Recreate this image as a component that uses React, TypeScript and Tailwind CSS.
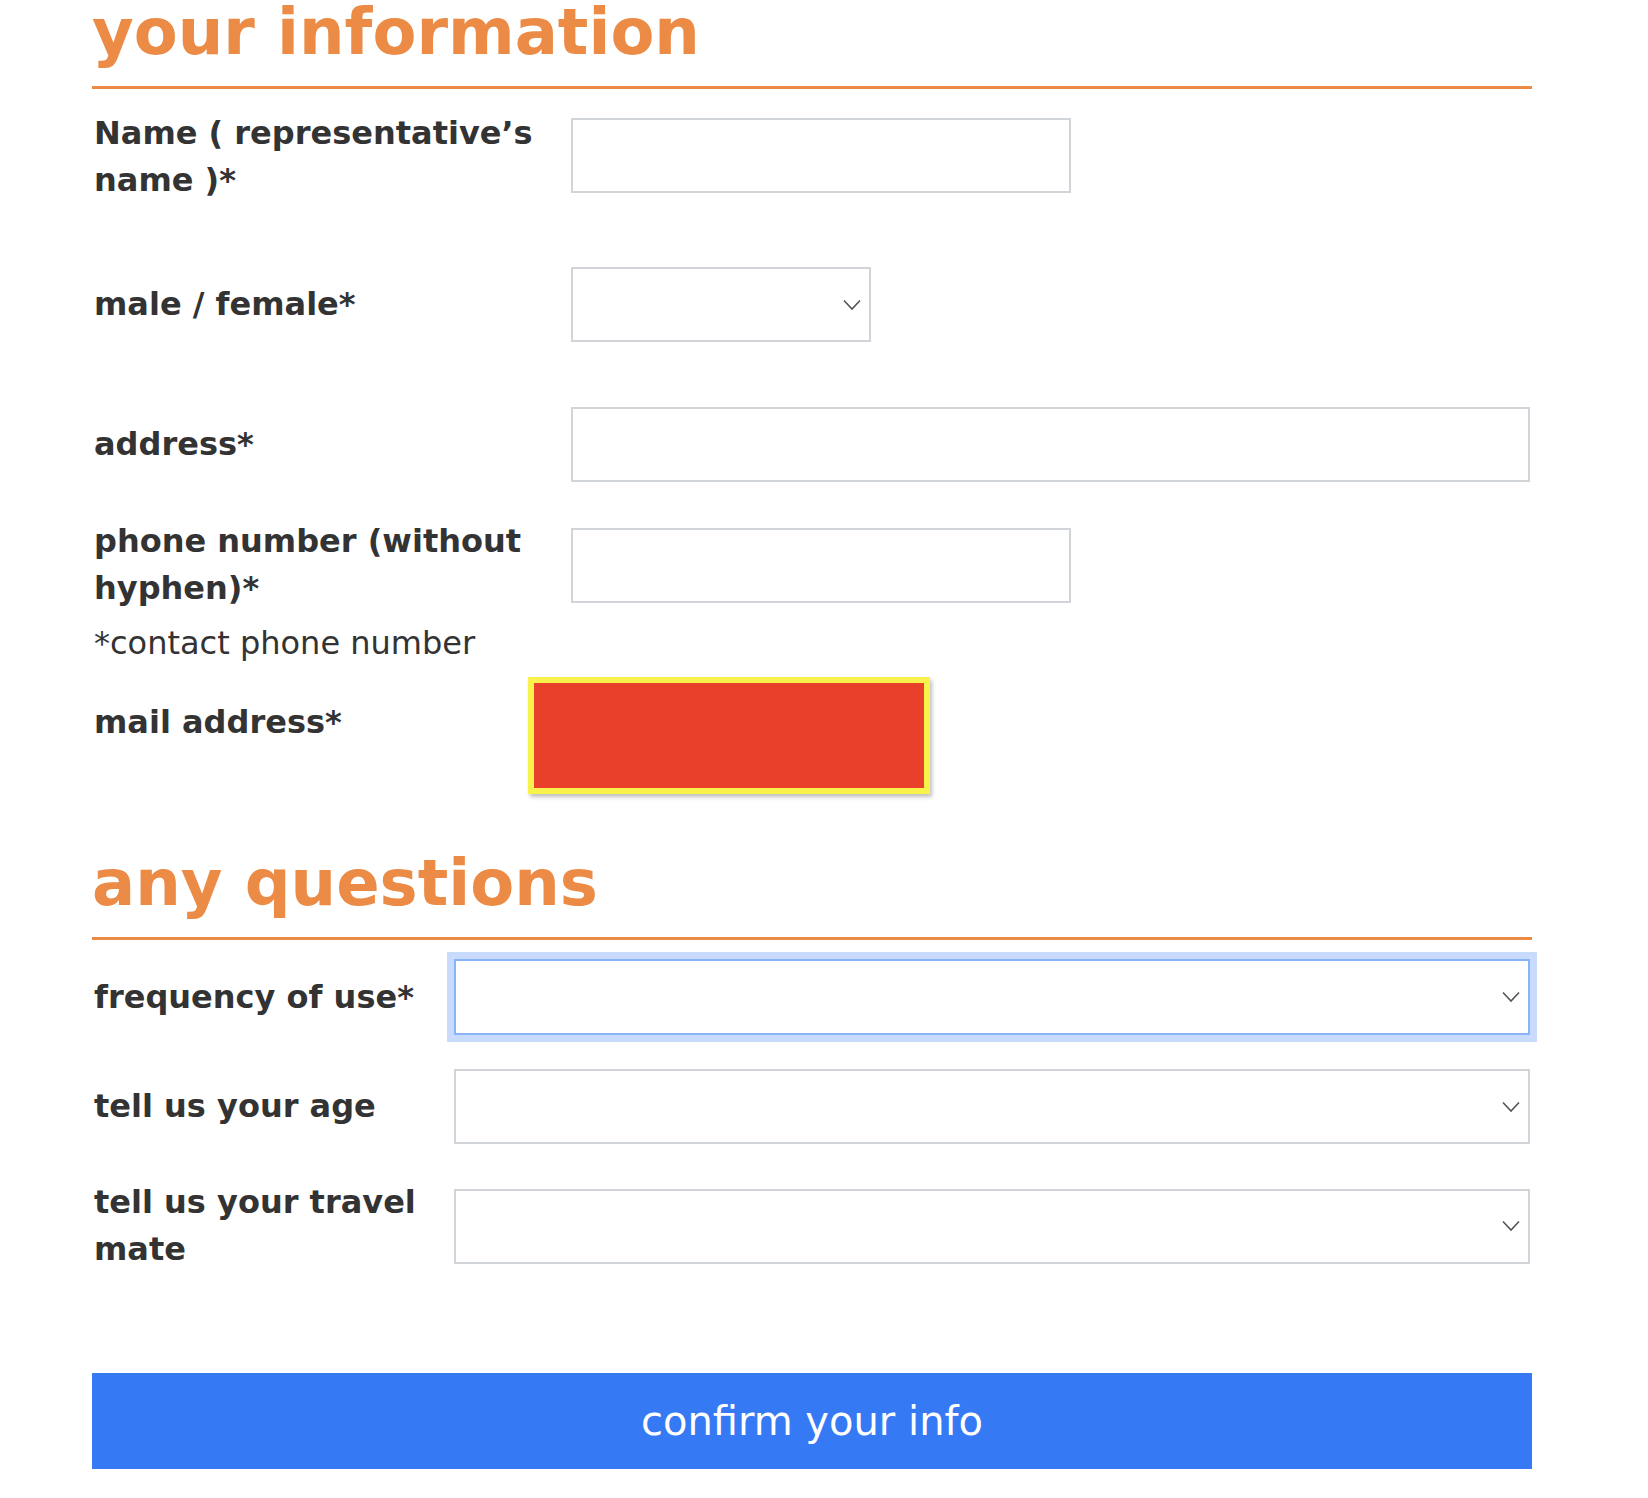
import React from "react";

const font = { fontFamily: '"DejaVu Sans", Verdana, sans-serif' };

function Chevron() {
  return (
    <svg width="18" height="11" viewBox="0 0 18 11" className="absolute right-[8px] top-1/2 -translate-y-1/2">
      <polyline points="1,1 9,9.5 17,1" fill="none" stroke="#555" strokeWidth="1.6" />
    </svg>
  );
}

function Label({ children, className = "" }: { children: React.ReactNode; className?: string }) {
  return (
    <div className={"text-[32px] leading-[47px] font-bold text-[#333] " + className}>
      {children}
    </div>
  );
}

export default function App() {
  return (
    <div className="bg-white w-[1648px] h-[1498px]" style={font}>
      <div className="ml-[92px] w-[1440px] pt-0">
        <h2 className="text-[64px] leading-none font-bold text-[#eb8b45] pb-[22px] border-b-[3px] border-[#eb8b45]">
          your information
        </h2>

        <div className="flex items-center mt-[18px]">
          <div className="w-[479px] pl-[2px] pt-[3px]">
            <Label className="w-[470px]">Name ( representative’s name )*</Label>
          </div>
          <div className="w-[500px] h-[75px] border-2 border-[#d1d5d9] bg-white" />
        </div>

        <div className="flex items-center mt-[63px]">
          <div className="w-[479px] pl-[2px]">
            <Label>male / female*</Label>
          </div>
          <div className="relative w-[300px] h-[75px] border-2 border-[#d1d5d9] bg-white">
            <Chevron />
          </div>
        </div>

        <div className="flex items-center mt-[65px]">
          <div className="w-[479px] pl-[2px]">
            <Label>address*</Label>
          </div>
          <div className="w-[959px] h-[75px] border-2 border-[#d1d5d9] bg-white" />
        </div>

        <div className="flex items-center mt-[36px]">
          <div className="w-[479px] pl-[2px]">
            <Label className="w-[470px]">phone number (without hyphen)*</Label>
          </div>
          <div className="w-[500px] h-[75px] border-2 border-[#d1d5d9] bg-white" />
        </div>
        <div className="pl-[2px] mt-[8px] text-[32px] leading-[47px] text-[#333]">
          *contact phone number
        </div>

        <div className="flex items-start mt-[10px]">
          <div className="w-[436px] pl-[2px] pt-[22px]">
            <Label>mail address*</Label>
          </div>
          <div className="w-[402px] h-[117px] bg-[#e8402a] border-[6px] border-[#f9f24d] shadow-[2px_3px_4px_rgba(0,0,0,0.25)]" />
        </div>

        <h2 className="mt-[57px] text-[64px] leading-none font-bold text-[#eb8b45] pb-[22px] border-b-[3px] border-[#eb8b45]">
          any questions
        </h2>

        <div className="flex items-center mt-[19px]">
          <div className="w-[362px] pl-[2px]">
            <Label>frequency of use*</Label>
          </div>
          <div className="relative w-[1076px] h-[76px] border-2 border-[#8ab4f8] bg-white outline-[7px] outline-solid outline-[#c9dbfc]">
            <Chevron />
          </div>
        </div>

        <div className="flex items-center mt-[34px]">
          <div className="w-[362px] pl-[2px]">
            <Label>tell us your age</Label>
          </div>
          <div className="relative w-[1076px] h-[75px] border-2 border-[#d1d5d9] bg-white">
            <Chevron />
          </div>
        </div>

        <div className="flex items-center mt-[35px]">
          <div className="w-[362px] pl-[2px]">
            <Label className="w-[355px]">tell us your travel mate</Label>
          </div>
          <div className="relative w-[1076px] h-[75px] border-2 border-[#d1d5d9] bg-white">
            <Chevron />
          </div>
        </div>

        <button className="mt-[100px] w-[1440px] h-[96px] bg-[#3679f5] text-white text-[40px] flex items-center justify-center">
          confirm your info
        </button>
      </div>
    </div>
  );
}
